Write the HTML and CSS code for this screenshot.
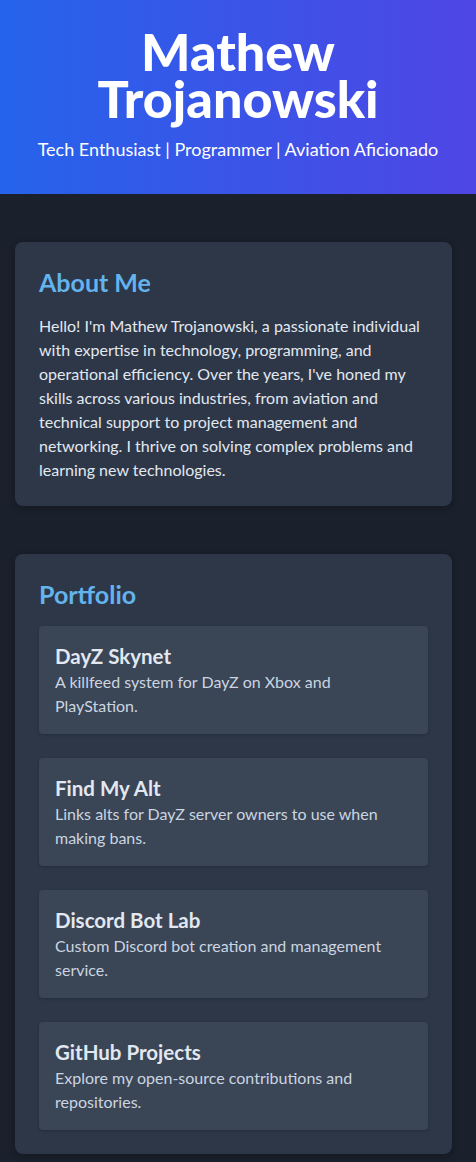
FILE: index.html
```html
<!DOCTYPE html>
<html lang="en">
<head>
<meta charset="utf-8">
<title>Mathew Trojanowski</title>
<link rel="stylesheet" href="styles.css">
</head>
<body>
<header class="hero">
  <h1 class="hero-title">Mathew Trojanowski</h1>
  <p class="hero-sub">Tech Enthusiast | Programmer | Aviation Aficionado</p>
</header>
<main class="content">
  <section class="card">
    <h2 class="card-title">About Me</h2>
    <p class="card-text">Hello! I'm Mathew Trojanowski, a passionate individual with expertise in technology, programming, and operational efficiency. Over the years, I've honed my skills across various industries, from aviation and technical support to project management and networking. I thrive on solving complex problems and learning new technologies.</p>
  </section>
  <section class="card">
    <h2 class="card-title">Portfolio</h2>
    <div class="items">
      <div class="item">
        <h3 class="item-title">DayZ Skynet</h3>
        <p class="item-text">A killfeed system for DayZ on Xbox and PlayStation.</p>
      </div>
      <div class="item">
        <h3 class="item-title">Find My Alt</h3>
        <p class="item-text">Links alts for DayZ server owners to use when making bans.</p>
      </div>
      <div class="item">
        <h3 class="item-title">Discord Bot Lab</h3>
        <p class="item-text">Custom Discord bot creation and management service.</p>
      </div>
      <div class="item">
        <h3 class="item-title">GitHub Projects</h3>
        <p class="item-text">Explore my open-source contributions and repositories.</p>
      </div>
    </div>
  </section>
</main>
</body>
</html>
```
FILE: styles.css
```css
* { box-sizing: border-box; }
html, body { margin: 0; padding: 0; }
body {
  background: #1a202c;
  color: #e2e8f0;
  font-family: Lato, "Noto Sans", sans-serif;
}
.hero {
  background: linear-gradient(90deg, #2563eb, #4f46e5);
  color: #ffffff;
  text-align: center;
  padding: 28px 16px 33px;
}
.hero-title {
  margin: 0;
  font-size: 52px;
  line-height: 47px;
  font-weight: 900;
}
.hero-sub {
  margin: 15px 0 0;
  font-size: 18px;
  line-height: 24px;
}
.content {
  padding: 48px 24px 48px 15px;
  display: flex;
  flex-direction: column;
  gap: 48px;
}
.card {
  background: #2d3748;
  border-radius: 8px;
  padding: 24px;
  box-shadow: 0 2px 6px rgba(0,0,0,0.25);
}
.card-title {
  margin: 0 0 16px;
  font-size: 25px;
  line-height: 32px;
  font-weight: 700;
  color: #63b3ed;
}
.card-text {
  margin: 0;
  font-size: 16px;
  line-height: 24px;
  color: #e2e8f0;
}
.items {
  display: flex;
  flex-direction: column;
  gap: 24px;
}
.item {
  background: #3a4556;
  border-radius: 4px;
  padding: 16px;
  box-shadow: 0 1px 3px rgba(0,0,0,0.2);
}
.item-title {
  margin: 0;
  font-size: 20.5px;
  line-height: 28px;
  font-weight: 700;
  color: #e2e8f0;
}
.item-text {
  margin: 0;
  font-size: 16px;
  line-height: 24px;
  color: #cbd5e0;
}
```
